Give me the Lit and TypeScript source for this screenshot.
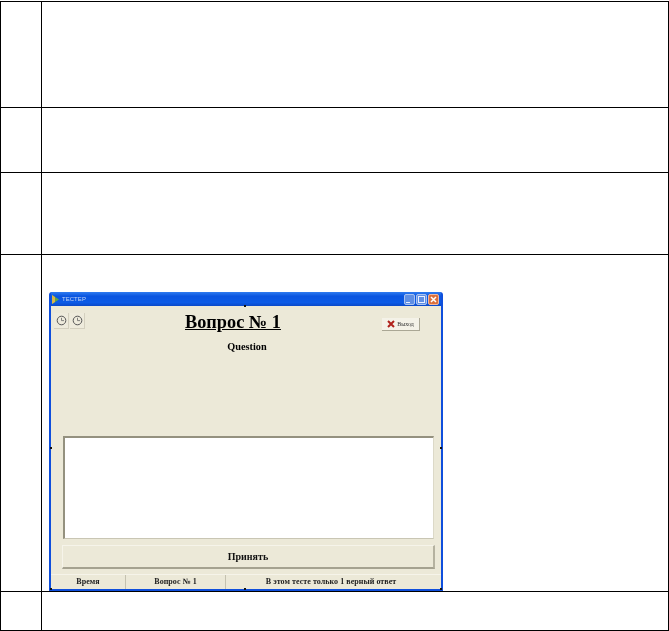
import { LitElement, html, css, svg } from "lit";
import { customElement } from "lit/decorators.js";

const clock = svg`<svg width="11" height="11" viewBox="0 0 11 11"><circle cx="5.5" cy="5.5" r="4.3" fill="none" stroke="#555" stroke-width="1"/><path d="M5.5 2.8V5.6H8" fill="none" stroke="#666" stroke-width=".8"/></svg>`;
const xMark = svg`<svg width="9" height="9" viewBox="0 0 9 9"><path d="M2 2L7 7M7 2L2 7" stroke="#fff" stroke-width="1.5"/></svg>`;

@customElement("app-root")
export class AppRoot extends LitElement {
  static styles = css`
    :host { display: block; width: 669px; height: 631px; background: #fff; font-family: "Liberation Serif", serif; overflow: hidden; }
    .table { margin-top: 1px; width: 669px; height: 630px; box-sizing: border-box; display: grid;
      grid-template-columns: 41px 1fr; grid-template-rows: 106px 65px 82px 337px 1fr;
      border: 1.4px solid #000; }
    .num { border-right: 1.4px solid #000; border-bottom: 1.4px solid #000; }
    .cell { border-bottom: 1.4px solid #000; min-width: 0; }
    .last { border-bottom: none; }
    .shot { padding: 37px 0 0 7px; }
    .win { position: relative; width: 394px; height: 299px; box-sizing: border-box; display: flex; flex-direction: column;
      background: #0f4fdc; border-radius: 3px 3px 0 0; padding: 0 2px 2px; overflow: hidden; filter: blur(.3px); }
    .bar { height: 14px; flex: none; display: flex; align-items: center; gap: 3px; padding: 0 2px 0 1px;
      background: linear-gradient(#2f7cf0, #0a55e0 30%, #0c5be6 75%, #0a49c8); }
    .logo { width: 7px; height: 9px; flex: none; }
    .cap { font: 6px "Liberation Sans", sans-serif; color: #c5d6f5; letter-spacing: .1px; flex: 1; }
    .btns { display: flex; gap: 1px; flex: none; }
    .wb { width: 11px; height: 11px; border-radius: 2px; background: #5f8fe4; border: 1px solid #a9c2ef; box-sizing: border-box; position: relative; flex: none; display: flex; align-items: center; justify-content: center; }
    .wb.x { background: #dc703c; border-color: #efb79f; }
    .wb svg { flex: none; }
    .wb i { position: absolute; display: block; border-color: #e8efff; border-style: solid; }
    .wb.min i { left: 1px; bottom: 1px; width: 4px; height: 0; border-width: 1px 0 0; }
    .wb.max i { left: 1px; top: 1px; right: 1px; bottom: 1px; border-width: 1px; }
    .client { flex: 1; background: #ece9d8; display: flex; flex-direction: column; min-height: 0; }
    .head { display: flex; align-items: flex-start; padding: 7px 0 0 3px; height: 33px; box-sizing: border-box; flex: none; }
    .clocks { display: flex; gap: 1px; width: 131px; flex: none; }
    .cb { width: 14px; height: 15px; display: flex; align-items: center; justify-content: center; background: #eeebdc; border-right: 1px solid #d4d0bf; border-bottom: 1px solid #d4d0bf; }
    h1 { margin: -1px 0 0; font-size: 18.3px; line-height: 20px; font-weight: bold; text-decoration: underline; color: #000; white-space: nowrap; width: 197px; }
    .exit { margin-top: 5px; width: 38px; height: 13px; box-sizing: border-box; background: #f4f2e8; border-right: 1px solid #aaa795; border-bottom: 1px solid #aaa795;
      display: flex; align-items: center; justify-content: center; gap: 2px; font-size: 6px; color: #333; }
    .q { margin: 2px 0 0 0; padding-left: 2px; text-align: center; font-size: 10.3px; line-height: 12px; font-weight: bold; color: #000; flex: none; }
    .answers { margin: 83px 7px 0 12px; height: 103px; flex: none; box-sizing: border-box; background: #fff;
      border: 2px solid #94917f; border-right: 1px solid #dcd9c8; border-bottom: 1px solid #c9c6b4; }
    .accept { margin: 6px 6px 0 11px; height: 24px; flex: none; box-sizing: border-box; background: #ece9d8;
      border: 1px solid #f6f4ea; border-right: 2px solid #b5b2a0; border-bottom: 2px solid #a5a290;
      display: flex; align-items: center; justify-content: center; font-size: 10px; font-weight: bold; color: #111; }
    .status { margin-top: 5px; flex: 1; display: grid; grid-template-columns: 75px 100px 1fr; border-top: 1px solid #f6f4ea; font-size: 8px; letter-spacing: .05px; font-weight: bold; color: #222; text-align: center; line-height: 13px; min-height: 0; }
    .status div { border-right: 1px solid #c4c1af; }
    .status div:last-child { border-right: none; padding-right: 5px; }
    .h { position: absolute; width: 2px; height: 2px; background: #111; }
    .h.t { left: 195px; top: 13px; }
    .h.b { left: 195px; bottom: 1px; }
    .h.l { left: 1px; top: 155px; }
    .h.r { right: 1px; top: 155px; }
    .h.c { right: 1px; bottom: 1px; }
    .h.d { left: 1px; bottom: 1px; }
  `;

  render() {
    return html`<div class="table">
      <div class="num"></div><div class="cell"></div>
      <div class="num"></div><div class="cell"></div>
      <div class="num"></div><div class="cell"></div>
      <div class="num"></div>
      <div class="cell shot">
        <div class="win">
          <div class="bar">
            <svg class="logo" viewBox="0 0 7 9"><path d="M0 0L7 4.5L0 9Z" fill="#5fa548"/><path d="M0 0L3 2V7L0 9Z" fill="#d9b54a"/></svg>
            <span class="cap">ТЕСТЕР</span>
            <span class="btns"><span class="wb min"><i></i></span><span class="wb max"><i></i></span><span class="wb x">${xMark}</span></span>
          </div>
          <div class="client">
            <div class="head">
              <div class="clocks"><span class="cb">${clock}</span><span class="cb">${clock}</span></div>
              <h1>Вопрос № 1</h1>
              <div class="exit">
                <svg width="8" height="8" viewBox="0 0 8 8"><path d="M1 1L7 7M7 1L1 7" stroke="#b0221c" stroke-width="2"/></svg>
                <span>Выход</span>
              </div>
            </div>
            <div class="q">Question</div>
            <div class="answers"></div>
            <div class="accept">Принять</div>
            <div class="status"><div>Время</div><div>Вопрос № 1</div><div>В этом тесте только 1 верный ответ</div></div>
          </div>
          <span class="h t"></span><span class="h b"></span><span class="h l"></span><span class="h r"></span><span class="h c"></span><span class="h d"></span>
        </div>
      </div>
      <div class="num last"></div><div class="cell last"></div>
    </div>`;
  }
}
